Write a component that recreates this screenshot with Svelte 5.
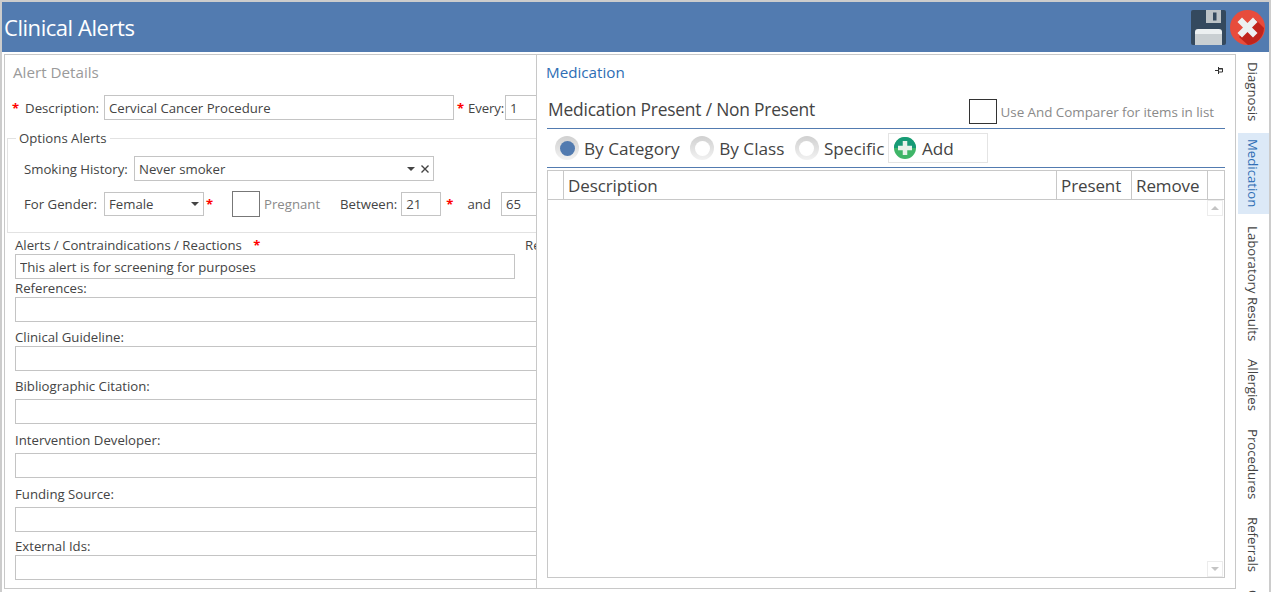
<script>
  // Clinical alert editor with the medication flyout open
  const tabs = ['Diagnosis', 'Medication', 'Laboratory Results', 'Allergies', 'Procedures', 'Referrals', 'Conditions'];
  const activeTab = 'Medication';

  // gap = room between the previous input and this one
  const refFields = [
    { label: 'References:', gap: 18, raised: false },
    { label: 'Clinical Guideline:', gap: 24, raised: false },
    { label: 'Bibliographic Citation:', gap: 28, raised: true },
    { label: 'Intervention Developer:', gap: 29, raised: true },
    { label: 'Funding Source:', gap: 29, raised: true },
    { label: 'External Ids:', gap: 23, raised: false }
  ];
  const radios = [
    { label: 'By Category', checked: true },
    { label: 'By Class', checked: false },
    { label: 'Specific', checked: false }
  ];
</script>

<div class="window">
  <header class="titlebar">
    <h1>Clinical Alerts</h1>
    <div class="actions">
      <svg class="icon" viewBox="0 0 35 35" width="35" height="35">
        <rect width="35" height="35" rx="2" fill="#34495e" />
        <rect x="15" y="0" width="15" height="13" fill="#bdc3c7" />
        <rect x="22" y="2.500" width="3.500" height="8" fill="#34495e" />
        <path d="M4 35V22q0-3 3-3h21q3 0 3 3v13z" fill="#ecf0f1" />
        <rect x="4" y="24" width="27" height="11" fill="#c9cfd2" />
      </svg>
      <svg class="icon" viewBox="0 0 35 35" width="35" height="35">
        <circle cx="17.500" cy="17.500" r="17.500" fill="#e74c3c" />
        <path d="M25 9l9 9a17.500 17.500 0 0 1-16 17l-9-8z" fill="#c0241c" />
        <path d="M12 7.500l5.500 5.500 5.500-5.500 4.500 4.500-5.500 5.500 5.500 5.500-4.500 4.500-5.500-5.500-5.500 5.500-4.500-4.500 5.500-5.500-5.500-5.500z" fill="#ecf0f1" />
      </svg>
    </div>
  </header>

  <div class="main">
    <div class="content">
      <section class="details">
        <div class="details-title">Alert Details</div>
        <div class="row desc-row">
          <span class="req">*</span>
          <label for="desc">Description:</label>
          <input id="desc" class="desc" value="Cervical Cancer Procedure" />
          <span class="req every-req">*</span>
          <label for="every">Every:</label>
          <input id="every" class="every" value="1" />
        </div>

        <fieldset>
          <legend>Options Alerts</legend>
          <div class="row smoking-row">
            <span class="lbl">Smoking History:</span>
            <div class="combo">
              <span>Never smoker</span>
              <i class="caret"></i>
              <svg viewBox="0 0 8 8" width="8" height="8"><path d="M0.500 0.500l7 7M7.500 0.500l-7 7" stroke="#444" stroke-width="1.400" /></svg>
            </div>
          </div>
          <div class="row gender-row">
            <span class="lbl">For Gender:</span>
            <div class="select"><span>Female</span><i class="caret"></i></div>
            <span class="req gender-req">*</span>
            <span class="check"></span>
            <span class="muted">Pregnant</span>
            <span class="lbl between">Between:</span>
            <input class="age" value="21" />
            <span class="req age-req">*</span>
            <span class="lbl and">and</span>
            <input class="age" value="65" />
          </div>
        </fieldset>

        <div class="alerts-label">
          <span>Alerts / Contraindications / Reactions</span>
          <span class="req">*</span>
          <span class="re">Recommendations</span>
        </div>
        <input class="alerts" value="This alert is for screening for purposes" />

        {#each refFields as f}
          <div class="ref-label" class:raised={f.raised} style:height="{f.gap}px">{f.label}</div>
          <input class="ref" />
        {/each}
      </section>

      <section class="flyout">
        <div class="flyout-head">
          <span>Medication</span>
          <svg viewBox="0 0 8 7" width="8" height="7"><path d="M0 3.500h3M3.500 0v7M3.500 1.500h4v3.500h-4" stroke="#333" fill="none" /><path d="M3.500 1h4v1.500h-4z" fill="#333" /></svg>
        </div>
        <div class="med-head">
          <h2>Medication Present / Non Present</h2>
          <span class="check dark"></span>
          <span class="muted">Use And Comparer for items in list</span>
        </div>
        <div class="toolbar">
          {#each radios as r}
            <span class="radio" class:checked={r.checked}><b></b></span>
            <span class="radio-label">{r.label}</span>
          {/each}
          <button type="button" class="add">
            <svg viewBox="0 0 22 22" width="22" height="22">
              <circle cx="11" cy="11" r="11" fill="#3fb568" />
              <path d="M0 11a11 11 0 0 1 22 0z" fill="#169a76" />
              <path d="M11 4v14M4 11h14" stroke="#e6f2ea" stroke-width="4.500" />
            </svg>
            Add
          </button>
        </div>
        <div class="grid">
          <div class="grid-head">
            <span class="c0"></span>
            <span class="c1">Description</span>
            <span class="c2">Present</span>
            <span class="c3">Remove</span>
            <span class="c4"></span>
          </div>
          <div class="grid-body">
            <div class="scroll">
              <span class="arrow up"></span>
              <span class="arrow down"></span>
            </div>
          </div>
        </div>
      </section>
    </div>

    <nav class="tabs">
      {#each tabs as t}
        <span class="tab" class:active={t === activeTab}>{t}</span>
      {/each}
    </nav>
  </div>
</div>

<style>
  :global(body) {
    margin: 0;
    background: #fff;
    overflow: hidden;
  }
  .window {
    box-sizing: border-box;
    width: 1271px;
    height: 592px;
    display: flex;
    flex-direction: column;
    border: 2px solid #cccccc;
    border-bottom: none;
    font-family: 'Open Sans', 'Noto Sans', sans-serif;
    font-size: 13.2px;
    color: #444;
    overflow: hidden;
  }
  .titlebar {
    flex: none;
    height: 50px;
    background: #527bb0;
    display: flex;
    align-items: center;
    justify-content: space-between;
    padding: 0 4px 0 2px;
  }
  h1 {
    margin: 0;
    font-size: 22px;
    font-weight: 400;
    color: #fff;
    letter-spacing: -0.45px;
  }
  .actions {
    display: flex;
    gap: 4px;
    padding-top: 1px;
  }
  .icon {
    display: block;
  }
  .main {
    flex: 1;
    min-height: 0;
    display: flex;
  }
  .content {
    box-sizing: border-box;
    flex: none;
    width: 1232px;
    height: 535px;
    margin: 2px 0 0 2px;
    border: 1px solid #c8c8c8;
    display: flex;
    overflow: hidden;
  }

  /* left form */
  .details {
    flex: none;
    width: 529px;
    overflow: hidden;
    padding-left: 2px;
  }
  .details-title {
    height: 40px;
    line-height: 34px;
    padding-left: 6px;
    font-size: 15.2px;
    color: #9a9a9a;
  }
  .row {
    display: flex;
    align-items: center;
    white-space: nowrap;
  }
  .req {
    color: #f00;
    font-weight: 700;
    font-size: 13px;
  }
  input {
    box-sizing: border-box;
    flex: none;
    height: 25px;
    border: 1px solid #c4c4c4;
    background: #fff;
    padding: 0 4px;
    margin: 0;
    font: inherit;
    color: #444;
    outline: none;
  }
  .desc-row {
    height: 25px;
    padding-left: 5px;
    margin-bottom: 18px;
  }
  .desc-row label {
    margin: 0 5px 0 6px;
  }
  .desc {
    width: 350px;
  }
  .every-req {
    margin-left: 3px;
  }
  .desc-row label[for='every'] {
    margin: 0 1px 0 4px;
    letter-spacing: -0.15px;
  }
  .every {
    width: 60px;
  }
  fieldset {
    box-sizing: border-box;
    width: 600px;
    height: 102px;
    margin: -7px 0 0 0;
    padding: 10px 0 0 16px;
    border: 1px solid #e2e2e2;
    border-right: none;
    min-width: 0;
  }
  legend {
    padding: 0 3px;
    margin-left: -8px;
    line-height: 15px;
  }
  .smoking-row {
    height: 25px;
    margin-bottom: 10px;
  }
  .lbl {
    flex: none;
  }
  .smoking-row .lbl {
    width: 110px;
  }
  .combo {
    box-sizing: border-box;
    width: 300px;
    height: 25px;
    border: 1px solid #c4c4c4;
    display: flex;
    align-items: center;
    padding: 0 4px;
    gap: 6px;
  }
  .combo span {
    flex: 1;
  }
  .caret {
    width: 0;
    height: 0;
    border: 4px solid transparent;
    border-top: 4px solid #444;
    border-bottom: none;
  }
  .gender-row {
    height: 25px;
  }
  .gender-row > .lbl:first-child {
    width: 80px;
  }
  .select {
    box-sizing: border-box;
    width: 100px;
    height: 24px;
    border: 1px solid #c4c4c4;
    display: flex;
    align-items: center;
    justify-content: space-between;
    padding: 0 4px;
  }
  .gender-req {
    margin: 0 20px 0 2px;
    width: 6px;
  }
  .check {
    box-sizing: border-box;
    flex: none;
    width: 28px;
    height: 26px;
    border: 1px solid #777;
    background: #fff;
  }
  .check.dark {
    border-color: #333;
    height: 25px;
    margin-top: 4px;
  }
  .muted {
    color: #8a8a8a;
    margin-left: 4px;
  }
  .between {
    margin: 0 4px 0 20px;
  }
  .age {
    width: 40px;
    height: 24px;
  }
  .age-req {
    margin: 0 14px 0 5px;
  }
  .and {
    margin-right: 10px;
    margin-left: 0;
  }
  .gender-row .age:last-child {
    width: 60px;
  }
  .alerts-label {
    position: relative;
    height: 21px;
    line-height: 24px;
    padding-left: 8px;
    white-space: nowrap;
  }
  .alerts-label .req {
    margin-left: 8px;
  }
  .re {
    position: absolute;
    left: 518px;
  }
  .alerts {
    display: block;
    width: 500px;
    margin-left: 8px;
  }
  .ref-label {
    box-sizing: border-box;
    display: flex;
    align-items: flex-end;
    padding-left: 8px;
    line-height: 17px;
    white-space: nowrap;
  }
  .ref-label.raised {
    padding-bottom: 4.5px;
  }
  .ref {
    display: block;
    width: 600px;
    margin-left: 8px;
  }

  /* medication flyout */
  .flyout {
    flex: 1;
    min-width: 0;
    background: #fff;
    border-left: 1px solid #c8c8c8;
    padding: 0 10px;
  }
  .flyout-head {
    height: 34px;
    display: flex;
    align-items: center;
    justify-content: space-between;
    color: #2e6db4;
    font-size: 15.2px;
    margin-left: -1px;
  }
  .flyout-head svg {
    margin: -3px 2px 0 0;
  }
  .med-head {
    box-sizing: border-box;
    height: 40px;
    padding: 1px 0 0 1px;
    display: flex;
    align-items: center;
    border-bottom: 1px solid #527bb0;
  }
  h2 {
    flex: 1;
    margin: 0;
    font-size: 17.4px;
    font-weight: 400;
    color: #444;
    letter-spacing: -0.2px;
  }
  .med-head .muted {
    margin: 6px 11px 0 4px;
    font-size: 13.45px;
    letter-spacing: -0.05px;
  }
  .toolbar {
    box-sizing: border-box;
    height: 39px;
    display: flex;
    align-items: center;
    padding-left: 8px;
    border-bottom: 1px solid #527bb0;
  }
  .radio {
    box-sizing: border-box;
    flex: none;
    width: 24px;
    height: 24px;
    border-radius: 50%;
    background: linear-gradient(#d0d0d0, #f2f2f2);
    display: flex;
    align-items: center;
    justify-content: center;
  }
  .radio b {
    width: 15px;
    height: 15px;
    border-radius: 50%;
    background: #fff;
  }
  .radio.checked b {
    background: #527bb0;
  }
  .radio-label {
    font-size: 17.2px;
    margin: 0 10.5px 0 5px;
  }
  .add {
    box-sizing: border-box;
    flex: none;
    width: 100px;
    height: 30px;
    margin-left: -7px;
    border: 1px solid #e4e4e4;
    background: #fff;
    display: flex;
    align-items: center;
    gap: 6px;
    padding: 0 5px;
    font: inherit;
    font-size: 17.2px;
    color: #444;
  }
  .grid {
    box-sizing: border-box;
    height: 408px;
    margin-top: 2px;
    border: 1px solid #c8c8c8;
    display: flex;
    flex-direction: column;
  }
  .grid-head {
    flex: none;
    height: 28px;
    display: flex;
    border-bottom: 1px solid #c8c8c8;
    font-size: 17px;
    line-height: 30px;
    letter-spacing: -0.1px;
  }
  .grid-head span {
    box-sizing: border-box;
    border-right: 1px solid #c8c8c8;
    padding-left: 4px;
  }
  .c0 { width: 16px; }
  .c1 { width: 493px; }
  .c2 { width: 75px; }
  .c3 { width: 76px; }
  .c4 { flex: 1; border-right: none !important; }
  .grid-body {
    flex: 1;
    min-height: 0;
    display: flex;
    justify-content: flex-end;
  }
  .scroll {
    width: 16px;
    margin-right: 1px;
    display: flex;
    flex-direction: column;
    justify-content: space-between;
  }
  .arrow {
    box-sizing: border-box;
    height: 16px;
    border: 1px solid #ececec;
    display: flex;
    align-items: center;
    justify-content: center;
  }
  .arrow::after {
    content: '';
    border: 4px solid transparent;
  }
  .arrow.up::after {
    border-top: none;
    border-bottom: 4px solid #c4c4c4;
  }
  .arrow.down::after {
    border-bottom: none;
    border-top: 4px solid #c4c4c4;
  }

  /* vertical tabs */
  .tabs {
    flex: 1;
    min-width: 0;
    display: flex;
    flex-direction: column;
    gap: 6px;
    margin-left: 2px;
    padding-top: 4px;
    overflow: hidden;
  }
  .tab {
    flex: none;
    box-sizing: border-box;
    writing-mode: vertical-rl;
    padding: 6px 2px 6px 0;
    display: flex;
    align-items: center;
    justify-content: center;
    width: 100%;
    font-size: 13.2px;
    white-space: nowrap;
  }
  .tab.active {
    background: #dce9f7;
    color: #2e6db4;
  }
</style>
